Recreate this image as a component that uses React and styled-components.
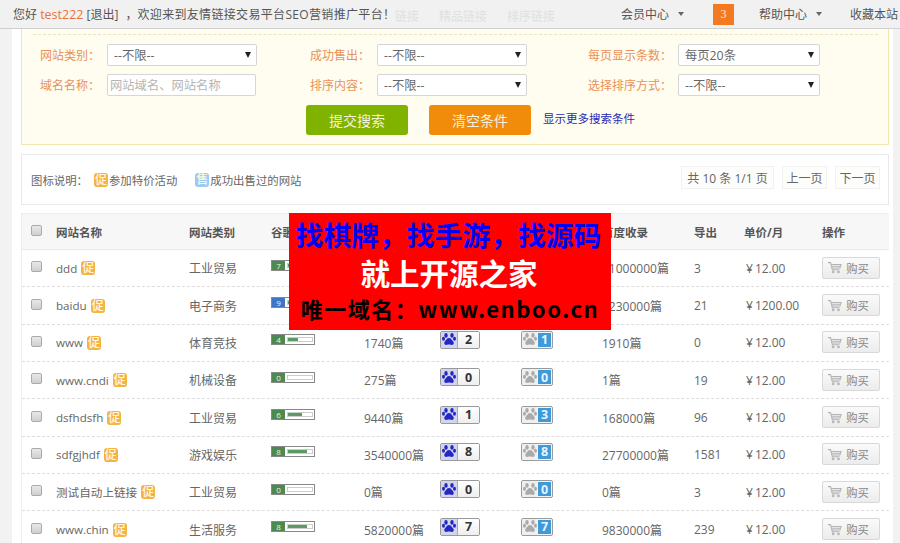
import React from "react";
import styled, { createGlobalStyle } from "styled-components";

const Global = createGlobalStyle`
  html, body { margin: 0; padding: 0; height: 543px; overflow: hidden; background: #f2f2f2; }
  body { font-family: "Open Sans", "Noto Sans CJK SC", sans-serif; font-size: 12px; color: #666; }
  * { box-sizing: border-box; }
`;

const Page = styled.div`position: relative; width: 900px; height: 543px; overflow: hidden;`;
const TopBar = styled.header`
  height: 29px; background: #f1f1f1; border-bottom: 1px solid #cfcfcf; display: flex; align-items: center;
  padding: 0 0 0 13px; font-size: 12px; color: #555; white-space: nowrap;
`;
const Welcome = styled.div`flex: none; width: 382px;`;
const UserName = styled.span`color: #e8743b; font-size: 12.5px;`;
const Comma = styled.span`margin-left: 7px;`;
const Slogan = styled.span`letter-spacing: 0.33px;`;
const GhostNav = styled.nav`flex: none; display: flex; gap: 20px; color: #e0e0e0; width: 226px; font-size: 12px; padding-top: 3px;`;
const TopLinks = styled.div`display: flex; align-items: center; flex: 1;`;
const TopLink = styled.span`display: inline-flex; align-items: center; gap: 9px; width: ${p => p.$w}px;`;
const Caret = styled.i`width: 0; height: 0; border: 3.5px solid transparent; border-top: 4px solid #666; border-bottom: 0; display: block;`;
const Count = styled.span`width: 21px; height: 21px; background: #f4791f; color: #ffe6cf; display: flex; align-items: center; justify-content: center; margin-right: 25px; font-family: "Liberation Serif", serif; font-size: 12px;`;

const Main = styled.main`margin: 0 7px 0 12px; background: #fff; height: 514px; padding: 0 4px 0 9px;`;
const SearchPanel = styled.section`
  height: 116px; background: #fffdf0; border: 1px solid #f1e6ad; border-top: 0; padding: 5px 0 0 18px;
  width: 868px;
`;
const DashedRule = styled.div`border-top: 1px dashed #ebe3c0; margin: 0 10px 9px -7px;`;
const FormGrid = styled.div`
  display: grid; grid-template-columns: 67px 150px 53px 67px 150px 61px 90px 142px; grid-auto-rows: 22px; row-gap: 8px; align-items: center;
`;
const Label = styled.label`color: #e9905a; font-size: 12px; white-space: nowrap;`;
const SelectBox = styled.div`
  height: 22px; background: #fff; border: 1px solid #d6d6d6; border-radius: 2px; display: flex; align-items: center; justify-content: space-between;
  padding: 0 5px 0 6px; color: #666; font-size: 12.3px; &::after { content: ""; border: 3px solid transparent; border-top: 6px solid #222; border-bottom: 0; }
`;
const TextBox = styled.input`
  height: 22px; width: 149px; background: #fff; border: 1px solid #d6d6d6; border-radius: 2px; padding: 0 2px; font: inherit; font-size: 12.3px; outline: none;
  &::placeholder { color: #b5b5b5; opacity: 1; }
`;
const Actions = styled.div`display: flex; align-items: center; margin: 9px 0 0 266px;`;
const ActionButton = styled.button`
  width: 102px; height: 30px; border: 0; border-radius: 3px; background: ${p => p.$bg}; color: #f6f2dc; font: inherit; font-size: 14px; margin-right: ${p => p.$gap}px; padding: 0;
`;
const MoreLink = styled.a`color: #2a2ab5; font-size: 11.5px; margin-top: -4px;`;

const LegendBar = styled.section`
  margin-top: 9px; width: 868px; height: 51px; border: 1px solid #e9e9e9; display: flex; align-items: center; padding: 0 8px 0 9px; font-size: 11.4px;
`;
const LegendText = styled.span`display: inline-flex; align-items: center; margin-right: ${p => p.$gap || 0}px; gap: 1px; white-space: nowrap;`;
const Mark = styled.span`
  width: 14px; height: 14px; border-radius: 3px; background: ${p => p.$bg}; color: #fff6e4; font-size: 12px; font-weight: 500; display: inline-flex; align-items: center; justify-content: center; line-height: 1; flex: none;
`;
const Pager = styled.div`margin-left: auto; display: flex; gap: 8px; margin-top: -4px; font-size: 12px;`;
const PageItem = styled.span`height: 23px; width: ${p => p.$w}px; border: 1px solid #f1f1f1; background: #fdfdfb; display: flex; align-items: center; justify-content: center; color: #666; white-space: nowrap;`;

const Table = styled.section`margin-top: 8px; width: 868px; border: 1px solid #eeeeee; border-bottom: 0; border-right: 0;`;
const columns = "34px 133px 82px 93px 76px 81px 81px 92px 50px 78px 1fr";
const HeadRow = styled.div`
  display: grid; grid-template-columns: ${columns}; height: 36px; align-items: center; background: #f8f7f8; border-bottom: 1px solid #e9e9e9; font-weight: 700; color: #555; font-size: 11.5px; white-space: nowrap;
`;
const Row = styled.div`
  display: grid; grid-template-columns: ${columns}; height: 37.35px; align-items: center; border-bottom: 1px dashed #ddd; white-space: nowrap; color: #666;
`;
const CheckCell = styled.div`padding-left: 9px; display: flex; margin-top: -3px;`;
const CheckBox = styled.span`width: 11px; height: 11px; border: 1px solid #aaa; border-radius: 2px; background: linear-gradient(#e8e8e8, #cfcfcf); display: block;`;
const NameCell = styled.div`display: flex; align-items: center; gap: 4px; font-size: 11.6px;`;
const BadgeCell = styled.div`display: flex; margin-top: -6px;`;
const PriceCell = styled.div`font-size: 12px; padding-left: 2px;`;
const Yen = styled.span`margin-right: 2px;`;

const PrBar = styled.div`width: 44px; height: 11px; border: 1px solid #888; display: flex; align-items: center; margin-top: -6px; background: #fff;`;
const PrNumber = styled.span`
  width: 13px; height: 9px; background: ${p => p.$blue ? "#3c77c7" : "#4c8a50"}; color: #e9f5e6; font-size: 8px; line-height: 9px; text-align: center; flex: none;
`;
const PrTrack = styled.span`flex: 1; height: 5px; margin: 0 1px 0 2px; border: 1px solid #ccc; display: block; position: relative; background: #fff;`;
const PrFill = styled.span`display: block; height: 3px; background: #5b9a62;`;

const Weight = styled.div`
  width: ${p => p.$w}px; height: 18px; border: 1px solid #9a9a9a; border-radius: 2px; display: flex; overflow: hidden; background: #f4f4f4;
`;
const PawPart = styled.span`width: ${p => p.$w}px; background: ${p => p.$bg}; display: flex; align-items: center; justify-content: center; flex: none; border-right: ${p => p.$line ? "1px solid #aaa" : "0"};`;
const ScoreDark = styled.span`flex: 1; display: flex; align-items: center; justify-content: center; font-weight: 700; color: #333; font-size: 12.5px; background: linear-gradient(#fff, #eee);`;
const ScoreBlue = styled.span`flex: 1; display: flex; align-items: center; justify-content: center; font-weight: 700; color: #e7f5ff; font-size: 12.5px; background: #3f9ad9; margin: 1px;`;

const BuyButton = styled.button`
  width: 58px; height: 22px; border: 1px solid #d8d8d8; border-radius: 2px; background: linear-gradient(#fafafa, #ececec); color: #888; font: inherit; font-size: 11.3px; display: flex; align-items: center; justify-content: center; gap: 4px; padding: 0 6px 0 0; margin-top: -1px;
`;

const Ad = styled.aside`
  position: absolute; left: 289px; top: 213px; width: 322px; height: 117px; background: #f00; font-weight: 700; text-align: center; display: flex; flex-direction: column; align-items: center; white-space: nowrap; font-family: "Noto Sans CJK SC", sans-serif;
`;
const AdLine = styled.div`
  height: ${p => p.$h}px; line-height: ${p => p.$h}px; color: ${p => p.$c}; font-size: ${p => p.$s}px; letter-spacing: ${p => p.$ls || 0}px; padding-right: ${p => p.$pr || 0}px;
`;

const Paw = ({ color }) => (
  <svg width="14" height="13" viewBox="0 0 14 13" aria-hidden="true">
    <g fill={color}>
      <ellipse cx="4" cy="2.400" rx="1.700" ry="2.300" />
      <ellipse cx="10" cy="2.400" rx="1.700" ry="2.300" />
      <ellipse cx="1.500" cy="5.800" rx="1.500" ry="2" />
      <ellipse cx="12.500" cy="5.800" rx="1.500" ry="2" />
      <path d="M7 4.900c1.700 0 2.500 1.400 3.400 2.500.8 1 1.600 1.700 1.300 3.100-.3 1.400-1.800 1.700-2.900 1.300-.7-.2-1.200-.4-1.800-.4s-1.100.2-1.800.4c-1.100.4-2.600.1-2.900-1.300-.3-1.400.5-2.100 1.300-3.100C4.500 6.300 5.300 4.900 7 4.900z" />
    </g>
  </svg>
);

const Cart = () => (
  <svg width="15" height="13" viewBox="0 0 17 14" fill="none" stroke="#b4b4b4" strokeWidth="1.200" aria-hidden="true">
    <path d="M1 1.500h3l2 8h8" />
    <path d="M4.600 3.500H16l-1.300 4H5.600M5.500 5.500h10" />
    <circle cx="7" cy="12" r="1" />
    <circle cx="13" cy="12" r="1" />
  </svg>
);

const rows = [
  { name: "ddd", cat: "工业贸易", pr: 7, sc: "0篇", bw: 0, sw: 0, bd: "31000000篇", out: "3", price: "12.00" },
  { name: "baidu", cat: "电子商务", pr: 9, sc: "0篇", bw: 0, sw: 0, bd: "1230000篇", out: "21", price: "1200.00", blue: true },
  { name: "www", cat: "体育竞技", pr: 4, sc: "1740篇", bw: 2, sw: 1, bd: "1910篇", out: "0", price: "12.00" },
  { name: "www.cndi", cat: "机械设备", pr: 0, sc: "275篇", bw: 0, sw: 0, bd: "1篇", out: "19", price: "12.00" },
  { name: "dsfhdsfh", cat: "工业贸易", pr: 6, sc: "9440篇", bw: 1, sw: 3, bd: "168000篇", out: "96", price: "12.00" },
  { name: "sdfgjhdf", cat: "游戏娱乐", pr: 8, sc: "3540000篇", bw: 8, sw: 8, bd: "27700000篇", out: "1581", price: "12.00" },
  { name: "测试自动上链接", cat: "工业贸易", pr: 0, sc: "0篇", bw: 0, sw: 0, bd: "0篇", out: "3", price: "12.00" },
  { name: "www.chin", cat: "生活服务", pr: 8, sc: "5820000篇", bw: 7, sw: 7, bd: "9830000篇", out: "239", price: "12.00" },
];

export default function App() {
  return (
    <Page>
      <Global />
      <TopBar>
        <Welcome>您好 <UserName>test222</UserName> [退出]<Comma>，</Comma><Slogan>欢迎来到友情链接交易平台SEO营销推广平台！</Slogan></Welcome>
        <GhostNav><span>链接</span><span>精品链接</span><span>排序链接</span></GhostNav>
        <TopLinks>
          <TopLink $w={92}>会员中心 <Caret /></TopLink>
          <Count>3</Count>
          <TopLink $w={91}>帮助中心 <Caret /></TopLink>
          <TopLink $w={52}>收藏本站</TopLink>
        </TopLinks>
      </TopBar>
      <Main>
        <SearchPanel>
          <DashedRule />
          <FormGrid>
            <Label>网站类别：</Label><SelectBox>--不限--</SelectBox><span />
            <Label>成功售出：</Label><SelectBox>--不限--</SelectBox><span />
            <Label>每页显示条数：</Label><SelectBox>每页20条</SelectBox>
            <Label>域名名称：</Label><TextBox placeholder="网站域名、网站名称" /><span />
            <Label>排序内容：</Label><SelectBox>--不限--</SelectBox><span />
            <Label>选择排序方式：</Label><SelectBox>--不限--</SelectBox>
          </FormGrid>
          <Actions>
            <ActionButton $bg="#7fb300" $gap={21}>提交搜索</ActionButton>
            <ActionButton $bg="#f08c0a" $gap={12}>清空条件</ActionButton>
            <MoreLink>显示更多搜索条件</MoreLink>
          </Actions>
        </SearchPanel>
        <LegendBar>
          <LegendText $gap={6}>图标说明：</LegendText>
          <LegendText $gap={18}><Mark $bg="#f5b342">促</Mark>参加特价活动</LegendText>
          <LegendText><Mark $bg="#9ccaf0">售</Mark>成功出售过的网站</LegendText>
          <Pager>
            <PageItem $w={93}>共 10 条 1/1 页</PageItem>
            <PageItem $w={45}>上一页</PageItem>
            <PageItem $w={45}>下一页</PageItem>
          </Pager>
        </LegendBar>
        <Table>
          <HeadRow>
            <CheckCell><CheckBox /></CheckCell>
            <div>网站名称</div><div>网站类别</div><div>谷歌PR</div><div>搜狗收录</div><div>百度权重</div><div>搜狗权重</div><div>百度收录</div><div>导出</div><div>单价/月</div><div>操作</div>
          </HeadRow>
          {rows.map(r => (
            <Row key={r.name}>
              <CheckCell><CheckBox /></CheckCell>
              <NameCell>{r.name}<Mark $bg="#f5b342">促</Mark></NameCell>
              <div>{r.cat}</div>
              <div>
                <PrBar>
                  <PrNumber $blue={r.blue}>{r.pr}</PrNumber>
                  <PrTrack><PrFill style={{ width: `${r.pr * 10}%` }} /></PrTrack>
                </PrBar>
              </div>
              <div>{r.sc}</div>
              <BadgeCell>
                <Weight $w={40}>
                  <PawPart $w={17} $bg="#cfd6ee" $line><Paw color="#2626c4" /></PawPart>
                  <ScoreDark>{r.bw}</ScoreDark>
                </Weight>
              </BadgeCell>
              <BadgeCell>
                <Weight $w={32}>
                  <PawPart $w={15} $bg="#efefef"><Paw color="#aaa" /></PawPart>
                  <ScoreBlue>{r.sw}</ScoreBlue>
                </Weight>
              </BadgeCell>
              <div>{r.bd}</div>
              <div>{r.out}</div>
              <PriceCell><Yen>¥</Yen>{r.price}</PriceCell>
              <div><BuyButton><Cart />购买</BuyButton></div>
            </Row>
          ))}
        </Table>
      </Main>
      <Ad>
        <AdLine $h={43} $c="#0000ff" $s={27.8} $pr={3}>找棋牌，找手游，找源码</AdLine>
        <AdLine $h={32} $c="#fff" $s={29.5} $pr={2}>就上开源之家</AdLine>
        <AdLine $h={41} $c="#000" $s={22} $ls={1.5}>唯一域名：www.enboo.cn</AdLine>
      </Ad>
    </Page>
  );
}
